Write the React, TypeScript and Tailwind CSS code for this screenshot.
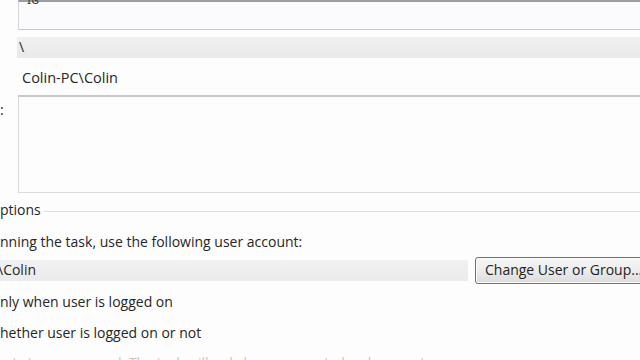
export default function App() {
  return (
    <div
      className="relative w-[640px] h-[360px] overflow-hidden bg-[#fdfdfd] text-[#262626] text-[14px] leading-none"
      style={{ fontFamily: '"Open Sans", "Noto Sans", sans-serif' }}
    >
      <div className="flex flex-col">
        {/* Name field (cut at top) */}
        <div className="relative ml-[18px] h-[30px] border-t-2 border-b border-l border-t-[#9c9ca4] border-b-[#c9c9cc] border-l-[#d6d6d8] bg-[#fbfbfe]">
          <span className="absolute left-[8px] -top-[9px] text-[13px] text-[#444]">ɪɞ</span>
        </div>

        {/* Location (read-only) */}
        <div className="mt-[7px] ml-[17px] h-[21px] bg-gradient-to-b from-[#f0f0f0] to-[#e9e9e9] flex items-center">
          <span className="ml-[2px] mt-[-2px]">\</span>
        </div>

        {/* Author */}
        <div className="h-[37px] flex items-center pl-[22px] pt-[3px]">
          <span className="text-[14.5px]">Colin-PC\Colin</span>
        </div>

        {/* Description */}
        <div className="flex">
          <div className="w-[18px] pt-[8px] text-[14px]">:</div>
          <div className="flex-1 h-[98px] border-t-2 border-l border-b border-t-[#c8c8cc] border-l-[#d8d8da] border-b-[#dcdcde] bg-[#fdfdfd]" />
        </div>

        {/* Security options group header */}
        <div className="mt-[9px] flex items-center h-[16px]">
          <span className="whitespace-nowrap">ptions</span>
          <div className="flex-1 ml-[3px] mt-[2px] h-px bg-[#dcdcdc]" />
        </div>

        <div className="mt-[17px] h-[16px] whitespace-nowrap">nning the task, use the following user account:</div>

        {/* Account row */}
        <div className="mt-[5px] flex items-center h-[28px]">
          <div className="shrink-0 w-[468px] h-[21px] bg-gradient-to-b from-[#f1f1f1] to-[#ebebeb] flex items-center">
            <span className="-ml-[2px]">\Colin</span>
          </div>
          <button className="shrink-0 ml-[7px] h-[27px] pl-[9px] pr-[8px] flex items-center whitespace-nowrap rounded-[3px] border border-[#707070] bg-gradient-to-b from-[#f6f6f6] via-[#ececec] to-[#dcdcdc] text-[14px] text-[#222] shadow-[inset_0_0_0_1px_#fcfcfc]">
            Change User or Group...
          </button>
        </div>

        <div className="mt-[11px] h-[16px] whitespace-nowrap">nly when user is logged on</div>
        <div className="mt-[15px] h-[16px] whitespace-nowrap">hether user is logged on or not</div>
        <div className="mt-[14px] h-[16px] whitespace-nowrap text-[#c4c4c4] pl-[4px]">
          ot store password. The task will only have access to local computer resources.
        </div>
      </div>
    </div>
  );
}
